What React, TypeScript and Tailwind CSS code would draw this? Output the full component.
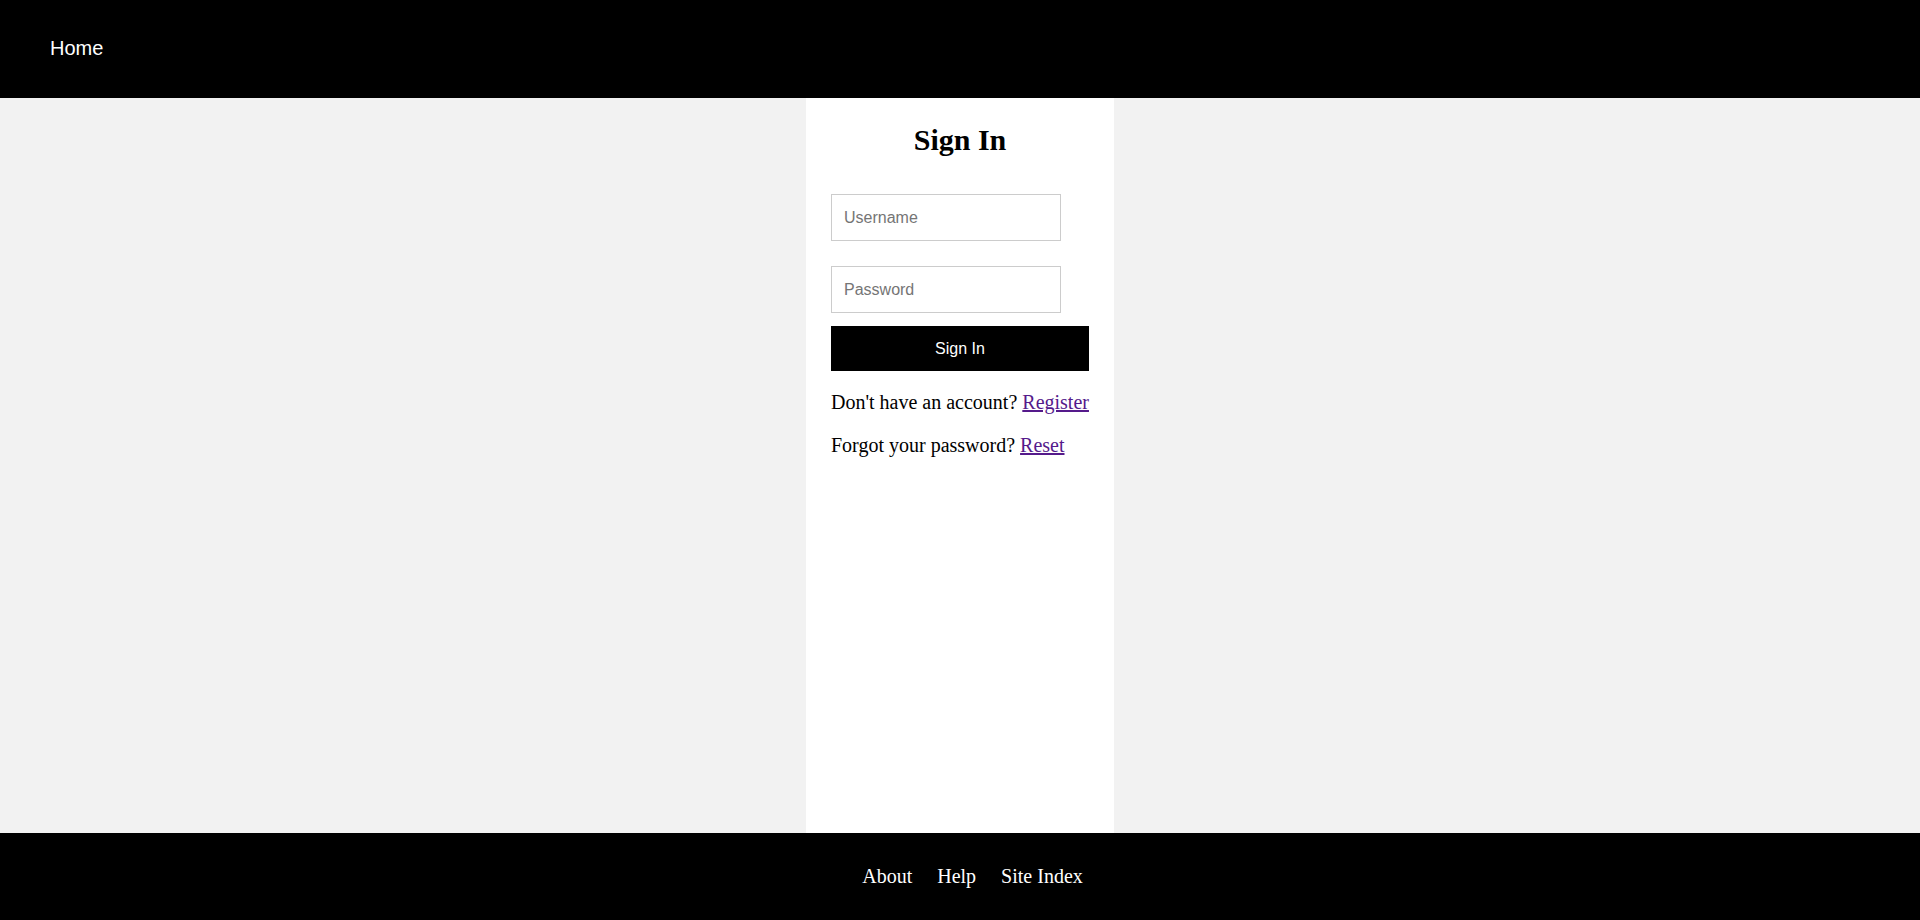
export default function App() {
	return (
		<div className="min-h-screen flex flex-col bg-[#f2f2f2] font-['Liberation_Serif',serif] text-black">
			<header className="h-[98px] bg-black flex items-center px-[50px]">
				<a href="#" className="font-['Liberation_Sans',Arial,sans-serif] text-[20px] leading-[23px] text-white no-underline mb-[2px]">
					Home
				</a>
			</header>

			<main className="flex-1 flex justify-center">
				<div className="w-[308px] bg-white px-[25px] pt-[25px]">
					<h1 className="text-center text-[30px] font-bold leading-[34px]">
						Sign In
					</h1>

					<form className="mt-[37px] flex flex-col" onSubmit={(e) => e.preventDefault()}>
						<input
							type="text"
							placeholder="Username"
							className="w-[230px] h-[47px] border border-[#cccccc] px-3 font-['Liberation_Sans',Arial,sans-serif] text-[16px] placeholder:text-[#757575] outline-none"
						/>
						<input
							type="password"
							placeholder="Password"
							className="mt-[25px] w-[230px] h-[47px] border border-[#cccccc] px-3 font-['Liberation_Sans',Arial,sans-serif] text-[16px] placeholder:text-[#757575] outline-none"
						/>
						<button
							type="submit"
							className="mt-[13px] w-full h-[45px] bg-black text-white font-['Liberation_Sans',Arial,sans-serif] text-[16px]"
						>
							Sign In
						</button>
					</form>

					<p className="mt-5 text-[20px] leading-[23px] whitespace-nowrap">
						Don't have an account? <a href="#" className="text-[#551a8b] underline">Register</a>
					</p>
					<p className="mt-5 text-[20px] leading-[23px] whitespace-nowrap">
						Forgot your password? <a href="#" className="text-[#551a8b] underline">Reset</a>
					</p>
				</div>
			</main>

			<footer className="h-[87px] bg-black flex items-center justify-center text-white text-[20px] leading-[23px]">
				<a href="#" className="ml-[25px]">About</a>
				<a href="#" className="ml-[25px]">Help</a>
				<a href="#" className="ml-[25px]">Site Index</a>
			</footer>
		</div>
	)
}
